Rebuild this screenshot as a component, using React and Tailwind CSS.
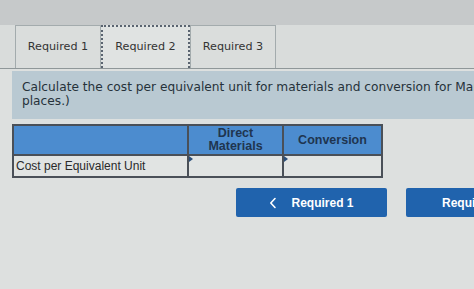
import React from 'react';

const tabs = ['Required 1', 'Required 2', 'Required 3'];

export default function App() {
  return (
    <div className="w-[474px] h-[289px] overflow-hidden bg-[#dde0df] font-['DejaVu_Sans',sans-serif]">
      <div className="h-[25px] bg-[#c6c9ca]" />

      <div className="flex pl-[15px] border-b border-[#8f9799] bg-[#d9dcdb]">
        {tabs.map((t, i) => (
          <div
            key={t}
            className={
              i === 1
                ? 'w-[89px] h-[43px] flex items-center justify-center text-[11.2px] text-[#333] border-2 border-dotted border-[#5a6470] border-b-0 bg-[#e0e3e2]'
                : 'w-[86px] h-[43px] flex items-center justify-center text-[11.2px] text-[#333] border border-[#a3abad] border-b-0 bg-[#dadddc]'
            }
          >
            {t}
          </div>
        ))}
      </div>

      <div className="ml-[12px] mt-[2px] h-[48px] bg-[#b9c9d2] pl-[10px] pt-[9px] text-[12.2px] leading-[14px] text-[#26323a] whitespace-nowrap">
        Calculate the cost per equivalent unit for materials and conversion for March. (Round your answers to 2 decimal
        <br />
        places.)
      </div>

      <table className="ml-[12px] mt-[5px] border-collapse font-['Liberation_Sans',sans-serif]">
        <thead>
          <tr className="bg-[#4c8ccf] h-[30px]">
            <th className="w-[175px] border-2 border-[#4a5058]" />
            <th className="w-[95px] border-2 border-[#4a5058] text-[12.5px] leading-[13px] font-bold text-[#1f3550]">
              Direct
              <br />
              Materials
            </th>
            <th className="w-[99px] border-2 border-[#4a5058] text-[12.5px] font-bold text-[#1f3550]">Conversion</th>
          </tr>
        </thead>
        <tbody>
          <tr className="h-[22px] bg-[#e1e4e3]">
            <td className="border-2 border-[#4a5058] pl-[2px] text-[12px] text-[#2a2a2a]">Cost per Equivalent Unit</td>
            <td className="relative border-2 border-[#4a5058]">
              <span className="absolute left-0 top-0 w-0 h-0 border-t-[3px] border-b-[3px] border-l-[4px] border-t-transparent border-b-transparent border-l-[#2b4f7a]" />
            </td>
            <td className="relative border-2 border-[#4a5058]">
              <span className="absolute left-0 top-0 w-0 h-0 border-t-[3px] border-b-[3px] border-l-[4px] border-t-transparent border-b-transparent border-l-[#2b4f7a]" />
            </td>
          </tr>
        </tbody>
      </table>

      <div className="flex mt-[10px] ml-[236px] gap-[19px] font-['Liberation_Sans',sans-serif]">
        <div className="w-[151px] h-[29px] shrink-0 rounded-[2px] bg-[#2063ad] flex items-center justify-center gap-[14px] text-white text-[12px] font-bold">
          <svg width="8" height="12" viewBox="0 0 8 12" fill="none">
            <path d="M6 1.5L1.8 6L6 10.5" stroke="white" strokeWidth="1.6" strokeLinecap="round" strokeLinejoin="round" />
          </svg>
          <span>Required 1</span>
        </div>
        <div className="w-[151px] h-[29px] shrink-0 rounded-[2px] bg-[#2063ad] flex items-center pl-[36px] text-white text-[12px] font-bold">
          Required 3
        </div>
      </div>
    </div>
  );
}
